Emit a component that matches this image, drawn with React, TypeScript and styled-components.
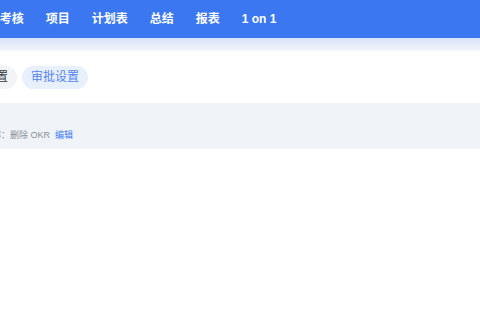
import React from 'react'
import styled, { createGlobalStyle } from 'styled-components'

const GlobalStyle = createGlobalStyle`
  html, body {
    margin: 0;
    padding: 0;
    background: #ffffff;
    overflow: hidden;
  }
  body {
    font-family: "Liberation Sans", "Noto Sans CJK SC", sans-serif;
  }
`

const Viewport = styled.div`
  width: 480px;
  height: 320px;
  overflow: hidden;
  background: #ffffff;
`

// page is scrolled horizontally, so the whole canvas starts left of the window
const Canvas = styled.div`
  margin-left: -49px;
  width: 529px;
`

const Header = styled.header`
  height: 38px;
  background: #3b77f1;
  display: flex;
  align-items: center;
`

const NavList = styled.nav`
  display: flex;
  align-items: center;
  gap: 22px;
`

const NavItem = styled.a`
  color: #ffffff;
  font-size: 12px;
  font-weight: 700;
  line-height: 38px;
  text-decoration: none;
  white-space: nowrap;
  cursor: pointer;
`

const ShadowBand = styled.div`
  height: 14px;
  background: linear-gradient(180deg, #d8e2f8 0%, #e6ecf8 45%, #eff2f8 80%, #ffffff 100%);
`

const TabRow = styled.div`
  display: flex;
  align-items: center;
  gap: 5px;
  margin-top: 14px;
`

const Pill = styled.button<{ $active?: boolean }>`
  height: 23px;
  padding: 0 9px;
  border: none;
  border-radius: 12px;
  background: ${p => (p.$active ? '#e8effd' : '#f3f4f6')};
  color: ${p => (p.$active ? '#5585f0' : '#333841')};
  font-family: inherit;
  font-size: 12px;
  line-height: 23px;
  white-space: nowrap;
  cursor: pointer;
`

const InfoBox = styled.div`
  margin-top: 14px;
  height: 46px;
  box-sizing: border-box;
  padding: 26px 14px 7px;
  background: #f0f3f8;
`

const InfoLine = styled.div`
  font-size: 9px;
  line-height: 13px;
  color: #8a8f98;
  white-space: nowrap;
`

const EditLink = styled.a`
  margin-left: 5px;
  color: #3f7bf2;
  cursor: pointer;
`

const navItems = ['OKR', '考核', '项目', '计划表', '总结', '报表', '1 on 1']

const App: React.FC = () => {
  return (
    <>
      <GlobalStyle />
      <Viewport>
        <Canvas>
          <Header>
            <NavList>
              {navItems.map(item => (
                <NavItem key={item}>{item}</NavItem>
              ))}
            </NavList>
          </Header>
          <ShadowBand />
          <TabRow>
            <Pill>基础设置</Pill>
            <Pill $active>审批设置</Pill>
          </TabRow>
          <InfoBox>
            <InfoLine>
              权限名称：删除 OKR
              <EditLink>编辑</EditLink>
            </InfoLine>
          </InfoBox>
        </Canvas>
      </Viewport>
    </>
  )
}

export default App
